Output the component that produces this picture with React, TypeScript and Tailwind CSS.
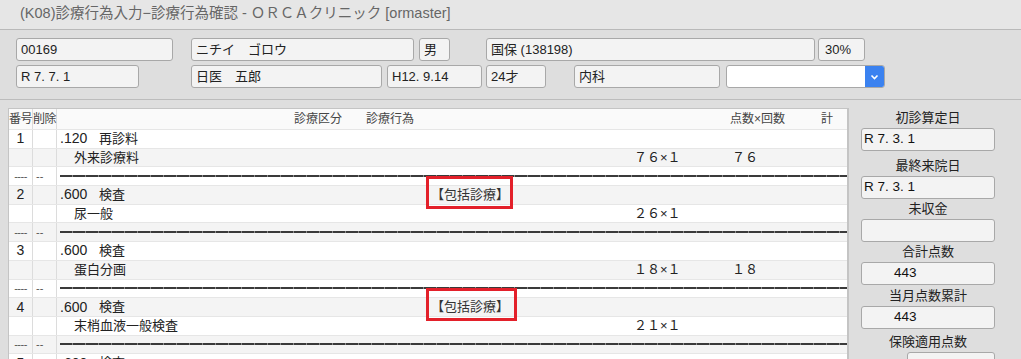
import React from 'react';

type Row =
  | { kind: 'code'; no: string; code: string; name: string; tag?: number }
  | { kind: 'item'; name: string; pts: string; total?: string }
  | { kind: 'sep' };

const rows: Row[] = [
  { kind: 'code', no: '1', code: '.120', name: '再診料' },
  { kind: 'item', name: '外来診療料', pts: '７６×１', total: '７６' },
  { kind: 'sep' },
  { kind: 'code', no: '2', code: '.600', name: '検査', tag: 87 },
  { kind: 'item', name: '尿一般', pts: '２６×１' },
  { kind: 'sep' },
  { kind: 'code', no: '3', code: '.600', name: '検査' },
  { kind: 'item', name: '蛋白分画', pts: '１８×１', total: '１８' },
  { kind: 'sep' },
  { kind: 'code', no: '4', code: '.600', name: '検査', tag: 91 },
  { kind: 'item', name: '末梢血液一般検査', pts: '２１×１' },
  { kind: 'sep' },
  { kind: 'code', no: '5', code: '.600', name: '検査' },
];

function Field({ w, children, className = '' }: { w: string; children?: React.ReactNode; className?: string }) {
  return (
    <div
      className={`${w} h-[23px] shrink-0 flex items-center rounded-[3px] border border-[#a8a8a8] bg-[#f3f3f3] px-[4px] text-[13px] text-[#222] whitespace-pre ${className}`}
    >
      {children}
    </div>
  );
}

function SideField({ label, value, indent = false, narrow = false, mt = '' }: { label: string; value?: string; indent?: boolean; narrow?: boolean; mt?: string }) {
  return (
    <div className={mt}>
      <div className="h-[20px] flex items-center justify-center text-[13px] text-[#222]">{label}</div>
      <div
        className={`h-[23px] flex items-center rounded-[3px] border border-[#a8a8a8] bg-[#f3f3f3] text-[13.5px] text-[#111] ${narrow ? 'ml-[46px]' : ''} ${indent ? 'pl-[32px]' : 'pl-[2px]'}`}
      >
        {value}
      </div>
    </div>
  );
}

function TableRow({ row, i }: { row: Row; i: number }) {
  const bg = i % 2 === 0 ? 'bg-white' : 'bg-[#f4f4f4]';
  return (
    <div className={`flex h-[18.7px] border-b border-[#e6e6e6] text-[13px] text-[#222] ${bg}`}>
      <div className="w-[24px] shrink-0 border-r border-[#dcdcdc] flex items-center justify-center">
        {row.kind === 'code' && <span className="text-[14px]">{row.no}</span>}
        {row.kind === 'sep' && <span className="text-[11px] text-[#555] tracking-[-0.5px]">----</span>}
      </div>
      <div className="w-[24px] shrink-0 border-r border-[#dcdcdc] flex items-center pl-[3px]">
        {row.kind === 'sep' && <span className="text-[11px] text-[#555]">--</span>}
      </div>
      <div className="flex-1 flex items-center pl-[3px] whitespace-pre">
        {row.kind === 'code' && (
          <>
            <span className="w-[39px] shrink-0 text-[14px]">{row.code}</span>
            <span className="w-[332px] shrink-0">{row.name}</span>
            {row.tag && (
              <span className="relative shrink-0 text-[#333]">
                【包括診療】
                <span
                  className={`absolute left-[-5px] top-[-9px] h-[33px] border-[3px] border-[#e3202a] ${row.tag === 87 ? 'w-[87px]' : 'w-[91px]'}`}
                />
              </span>
            )}
          </>
        )}
        {row.kind === 'item' && (
          <>
            <span className="w-[14px] shrink-0" />
            <span className="w-[560px] shrink-0">{row.name}</span>
            <span className="w-[98px] shrink-0">{row.pts}</span>
            <span>{row.total}</span>
          </>
        )}
        {row.kind === 'sep' && (
          <div className="h-[2px] w-full bg-[repeating-linear-gradient(90deg,#3a3a3a_0_12px,#8a8a8a_12px_13px)]" />
        )}
      </div>
    </div>
  );
}

export default function App() {
  return (
    <div className="w-[1021px] h-[359px] overflow-hidden bg-[#dedede] font-['Liberation_Sans','Noto_Sans_CJK_JP',sans-serif]">
      {/* Title bar */}
      <div className="h-[30px] flex items-center pb-[2px] pl-[20px] bg-[#e6e6e6] border-b border-[#b9b9b9] text-[14.5px] text-[#666] whitespace-pre">
        (K08)診療行為入力−診療行為確認 - ＯＲＣＡクリニック [ormaster]
      </div>

      {/* Patient header */}
      <div className="pt-[8px] pl-[16px]">
        <div className="flex">
          <Field w="w-[157px]">00169</Field>
          <Field w="w-[223px]" className="ml-[18px]">ニチイ　ゴロウ</Field>
          <Field w="w-[31px]" className="ml-[5px]">男</Field>
          <Field w="w-[329px]" className="ml-[36px]">国保 (138198)</Field>
          <Field w="w-[47px]" className="ml-[3px] pl-[6px]">30%</Field>
        </div>
        <div className="flex mt-[4px]">
          <Field w="w-[123px]">R 7. 7. 1</Field>
          <Field w="w-[191px]" className="ml-[52px]">日医　五郎</Field>
          <Field w="w-[95px]" className="ml-[5px]">H12. 9.14</Field>
          <Field w="w-[60px]" className="ml-[4px]">24才</Field>
          <Field w="w-[146px]" className="ml-[28px]">内科</Field>
          <div className="ml-[6px] w-[159px] h-[23px] flex rounded-[3px] border border-[#a8a8a8] bg-white overflow-hidden">
            <div className="flex-1" />
            <div className="w-[19px] bg-[#3b82f0] flex items-center justify-center">
              <svg width="9" height="6" viewBox="0 0 9 6">
                <path d="M1.5 1.5 L4.5 4.5 L7.5 1.5" fill="none" stroke="white" strokeWidth="1.6" />
              </svg>
            </div>
          </div>
        </div>
      </div>

      <div className="mt-[11px] border-t border-[#bcbcbc]" />

      {/* Body */}
      <div className="flex pt-[8px] pl-[8px]">
        <div className="w-[841px] h-[260px] shrink-0 border-l border-t border-r-2 border-[#c4c4c4] bg-white overflow-hidden">
          <div className="flex h-[21px] items-center border-b border-[#e6e6e6] bg-[#fafafa] text-[12px] text-[#444] whitespace-nowrap">
            <div className="w-[24px] shrink-0 h-full border-r border-[#dcdcdc] flex items-center tracking-[-0.5px] overflow-visible">番号</div>
            <div className="w-[24px] shrink-0 h-full border-r border-[#dcdcdc] flex items-center tracking-[-0.5px] overflow-visible">削除</div>
            <span className="ml-[237px] w-[72px]">診療区分</span>
            <span className="w-[364px]">診療行為</span>
            <span className="w-[91px]">点数×回数</span>
            <span>計</span>
          </div>
          {rows.map((r, i) => (
            <TableRow key={i} row={r} i={i} />
          ))}
        </div>

        {/* Side panel */}
        <div className="ml-[12px] w-[134px] shrink-0">
          <SideField label="初診算定日" value="R 7. 3. 1" />
          <SideField label="最終来院日" value="R 7. 3. 1" mt="mt-[5px]" />
          <SideField label="未収金" />
          <SideField label="合計点数" value="443" indent />
          <SideField label="当月点数累計" value="443" indent mt="mt-[1px]" />
          <SideField label="保険適用点数" narrow mt="mt-[3px]" />
        </div>
      </div>
    </div>
  );
}
